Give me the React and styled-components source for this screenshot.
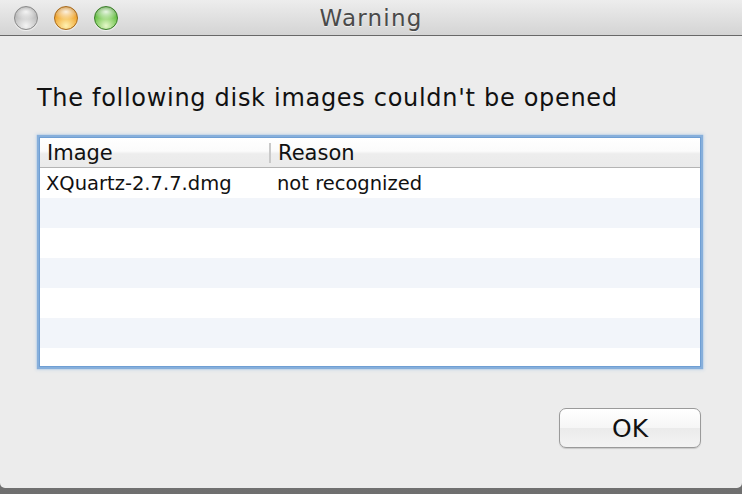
import React from 'react'
import styled, { createGlobalStyle } from 'styled-components'

const Global = createGlobalStyle`
  html, body {
    margin: 0;
    padding: 0;
    background: linear-gradient(#9a9a9a, #6f6f6f);
    height: 494px;
    overflow: hidden;
  }
  body {
    font-family: "DejaVu Sans", "Liberation Sans", sans-serif;
  }
`;

const Window = styled.div`
  width: 742px;
  height: 488px;
  background: #ececec;
  border-radius: 0 0 5px 5px;
  display: flex;
  flex-direction: column;
  overflow: hidden;
`;

const TitleBar = styled.div`
  height: 35px;
  flex: none;
  display: grid;
  grid-template-columns: 1fr auto 1fr;
  align-items: center;
  background: linear-gradient(#ededed, #d4d4d4);
  border-bottom: 1px solid #686868;
`;

const Lights = styled.div`
  display: flex;
  gap: 16px;
  padding-left: 14px;
`;

const palette = {
  gray: ['#f4f4f4', '#bdbdbd', '#8a8a8a'],
  orange: ['#fff1b0', '#f0a733', '#a8691a'],
  green: ['#e4f8c8', '#6cc24a', '#3a7d28'],
};

const Light = styled.div`
  width: 24px;
  height: 24px;
  border-radius: 50%;
  box-sizing: border-box;
  border: 1px solid ${p => palette[p.$c][2]};
  background:
    radial-gradient(ellipse 60% 35% at 50% 22%, rgba(255,255,255,0.85), rgba(255,255,255,0) 100%),
    radial-gradient(circle at 50% 85%, ${p => palette[p.$c][0]} 0%, ${p => palette[p.$c][1]} 60%, ${p => palette[p.$c][2]} 100%);
  box-shadow: 0 1px 1px rgba(255,255,255,0.7);
`;

const Title = styled.div`
  font-size: 23px;
  letter-spacing: 1.2px;
  color: #4a4a4a;
  text-shadow: 0 1px 0 rgba(255,255,255,0.6);
`;

const Body = styled.div`
  flex: 1;
  display: flex;
  flex-direction: column;
  padding: 47px 41px 0 37px;
`;

const Heading = styled.div`
  font-size: 24px;
  letter-spacing: 0.7px;
  color: #111;
  line-height: 30px;
`;

const TableFrame = styled.div`
  margin: 25px 0 0 3px;
  width: 660px;
  height: 228px;
  background: #fff;
  box-shadow: 0 0 0 1px #6f9fd4, 0 0 1px 3px rgba(122, 167, 216, 0.85), 0 0 3px 4px rgba(160, 195, 230, 0.45);
  display: flex;
  flex-direction: column;
  overflow: hidden;
`;

const HeaderRow = styled.div`
  height: 29px;
  flex: none;
  display: flex;
  align-items: center;
  background: linear-gradient(#ffffff, #fbfbfb 45%, #ededed 55%, #ebebeb);
  border-bottom: 1px solid #b4b4b4;
`;

const HeaderCell = styled.div`
  width: ${p => p.$w || 'auto'};
  flex: ${p => (p.$w ? 'none' : 1)};
  box-sizing: border-box;
  padding-left: ${p => p.$pad || 7}px;
  font-size: 21px;
  color: #111;
  height: 20px;
  line-height: 20px;
  border-right: ${p => (p.$divider ? '2px solid #c9c9c9' : 'none')};
`;

const Row = styled.div`
  height: 30px;
  flex: none;
  display: flex;
  align-items: center;
  background: ${p => (p.$odd ? '#f2f5fa' : '#ffffff')};
`;

const Cell = styled.div`
  width: ${p => p.$w || 'auto'};
  flex: ${p => (p.$w ? 'none' : 1)};
  box-sizing: border-box;
  padding-left: ${p => p.$pad || 6}px;
  font-size: 19.5px;
  color: #111;
`;

const Footer = styled.div`
  display: flex;
  justify-content: flex-end;
  margin-top: 42px;
`;

const Button = styled.button`
  width: 142px;
  height: 40px;
  border: 1px solid #9a9a9a;
  border-radius: 7px;
  background: linear-gradient(#ffffff, #f6f6f6 50%, #ebebeb 51%, #f3f3f3);
  box-shadow: 0 1px 1px rgba(0,0,0,0.15);
  font-family: "DejaVu Sans", "Liberation Sans", sans-serif;
  font-size: 25px;
  color: #111;
  padding: 0;
`;

const rows = [
  { image: 'XQuartz-2.7.7.dmg', reason: 'not recognized' },
  {}, {}, {}, {}, {}, {},
];

export default function App() {
  return (
    <>
      <Global />
      <Window>
        <TitleBar>
          <Lights>
            <Light $c="gray" />
            <Light $c="orange" />
            <Light $c="green" />
          </Lights>
          <Title>Warning</Title>
          <div />
        </TitleBar>
        <Body>
          <Heading>The following disk images couldn't be opened</Heading>
          <TableFrame>
            <HeaderRow>
              <HeaderCell $w="231px" $divider>Image</HeaderCell>
              <HeaderCell $pad={7}>Reason</HeaderCell>
            </HeaderRow>
            {rows.map((r, i) => (
              <Row key={i} $odd={i % 2 === 1}>
                <Cell $w="231px">{r.image}</Cell>
                <Cell $pad={6}>{r.reason}</Cell>
              </Row>
            ))}
          </TableFrame>
          <Footer>
            <Button>OK</Button>
          </Footer>
        </Body>
      </Window>
    </>
  );
}
